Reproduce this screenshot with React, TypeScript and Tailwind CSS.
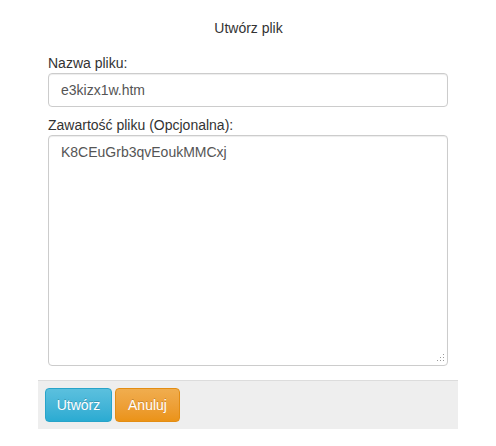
import React from "react";

export default function App() {
  const font = { fontFamily: '"Liberation Sans", Arial, sans-serif' };
  const dots: [number, number][] = [
    [8, 0],
    [8, 3],
    [5, 3],
    [8, 6],
    [5, 6],
    [2, 6],
  ];
  return (
    <div className="w-[496px] h-[446px] bg-white text-[14px] leading-[20px] text-[#333]" style={font}>
      <div className="ml-[38px] w-[420px] pt-[18px]">
        <div className="text-center text-[#333] pl-[1px]">Utwórz plik</div>
        <div className="px-[10px] mt-[15px]">
          <label className="block">Nazwa pliku:</label>
          <input
            readOnly
            value="e3kizx1w.htm"
            className="block w-full h-[34px] px-[12px] py-[6px] border border-[#ccc] rounded-[4px] text-[#555] shadow-[inset_0_1px_1px_rgba(0,0,0,0.075)] outline-none"
            style={font}
          />
          <label className="block mt-[8px]">Zawartość pliku (Opcjonalna):</label>
          <div className="relative">
            <textarea
              readOnly
              value="K8CEuGrb3qvEoukMMCxj"
              className="block w-full h-[231px] px-[12px] py-[6px] border border-[#ccc] rounded-[4px] text-[#555] shadow-[inset_0_1px_1px_rgba(0,0,0,0.075)] outline-none resize-none"
              style={font}
            />
            <svg className="absolute right-[3px] bottom-[4px]" width="10" height="8" viewBox="0 0 10 8">
              {dots.map(([x, y], i) => (
                <rect key={i} x={x} y={y} width="1" height="1" fill="#9a9a9a" />
              ))}
            </svg>
          </div>
        </div>
        <div className="mt-[14px] h-[49px] bg-[#eeeeee] border-t border-[#dcdcdc] flex items-start pt-[7px] pl-[7px]">
          <button
            className="w-[67px] h-[34px] rounded-[4px] border border-[#28a4c9] text-white bg-gradient-to-b from-[#5bc0de] to-[#2aabd2] [text-shadow:0_-1px_0_rgba(0,0,0,0.2)]"
            style={font}
          >
            Utwórz
          </button>
          <button
            className="ml-[3px] w-[65px] h-[34px] rounded-[4px] border border-[#e38d13] text-white bg-gradient-to-b from-[#f0ad4e] to-[#eb9316] [text-shadow:0_-1px_0_rgba(0,0,0,0.2)]"
            style={font}
          >
            Anuluj
          </button>
        </div>
      </div>
    </div>
  );
}
